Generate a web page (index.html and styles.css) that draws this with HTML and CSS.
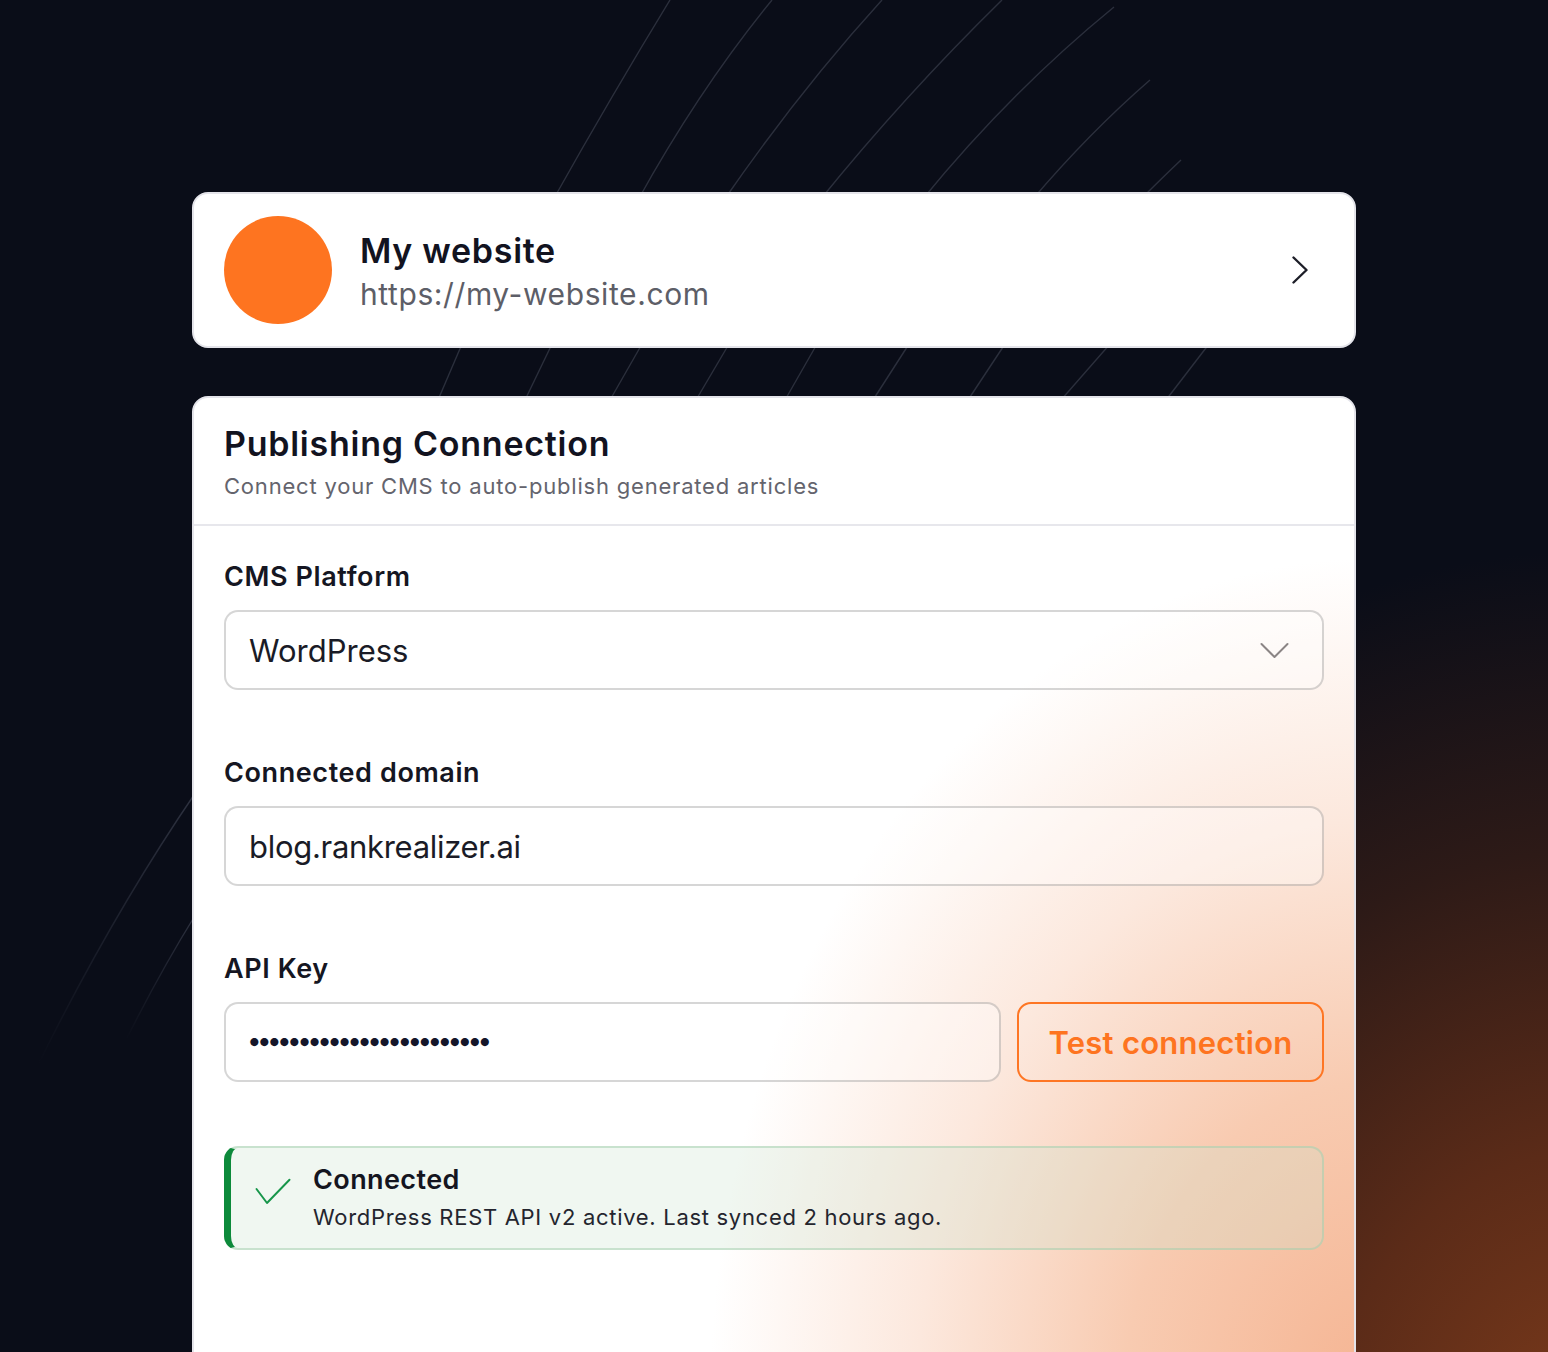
FILE: index.html
```html
<!DOCTYPE html>
<html lang="en">
<head>
<meta charset="utf-8">
<title>Publishing Connection</title>
<link rel="stylesheet" href="styles.css">
</head>
<body>
<svg class="bg-lines" width="1548" height="1352" viewBox="0 0 1548 1352" aria-hidden="true">
  <defs>
    <linearGradient id="fadeLeft" x1="0" y1="0" x2="0" y2="1">
      <stop offset="0" stop-color="#2e3240"/>
      <stop offset="1" stop-color="#2e3240" stop-opacity="0"/>
    </linearGradient>
  </defs>
  <g fill="none" stroke="#2b2f3c" stroke-width="1.4">
    <path d="M670,0 Q612,95 553,200"/>
    <path d="M772,0 Q700,88 638,200"/>
    <path d="M882,0 Q800,90 724,200"/>
    <path d="M1002,0 Q905,95 820,200"/>
    <path d="M1114,7 Q1010,92 922,200"/>
    <path d="M1150,80 Q1090,132 1032,200"/>
    <path d="M1181,160 Q1162,178 1140,200"/>
    <path d="M462,344 L438,400"/>
    <path d="M552,344 L525,400"/>
    <path d="M642,344 L610,400"/>
    <path d="M729,344 L696,400"/>
    <path d="M817,344 L785,400"/>
    <path d="M909,344 L873,400"/>
    <path d="M1005,344 L968,400"/>
    <path d="M1110,344 L1061,400"/>
    <path d="M1209,344 L1166,400"/>
  </g>
  <g fill="none" stroke="url(#fadeLeft)" stroke-width="1.4">
    <path d="M196,792 Q112,915 38,1065"/>
    <path d="M196,914 Q160,972 126,1040"/>
  </g>
</svg>

<main class="page">
  <section class="site-card">
    <div class="avatar"></div>
    <div class="site-info">
      <div class="site-name">My website</div>
      <div class="site-url">https://my-website.com</div>
    </div>
    <svg class="chevron-right" width="16" height="28" viewBox="0 0 16 28" aria-hidden="true">
      <path d="M1.5 1.5 L14.5 14 L1.5 26.5" fill="none" stroke="#1d1e28" stroke-width="2.4" stroke-linecap="round" stroke-linejoin="round"/>
    </svg>
  </section>

  <section class="panel">
    <header class="panel-head">
      <h1 class="panel-title">Publishing Connection</h1>
      <p class="panel-sub">Connect your CMS to auto-publish generated articles</p>
    </header>

    <div class="panel-body">
      <div class="field">
        <div class="label">CMS Platform</div>
        <div class="input select">
          <span class="value">WordPress</span>
          <svg class="chevron-down" width="30" height="17" viewBox="0 0 30 17" aria-hidden="true">
            <path d="M1.5 2 L14.5 15 L27.5 2" fill="none" stroke="#8b8585" stroke-width="2" stroke-linecap="round" stroke-linejoin="round"/>
          </svg>
        </div>
      </div>

      <div class="field">
        <div class="label">Connected domain</div>
        <div class="input">
          <span class="value domain">blog.rankrealizer.ai</span>
        </div>
      </div>

      <div class="field">
        <div class="label">API Key</div>
        <div class="key-row">
          <div class="input">
            <span class="dots">••••••••••••••••••••••••</span>
          </div>
          <button class="btn-outline">Test connection</button>
        </div>
      </div>

      <div class="status">
        <svg class="check" width="36" height="28" viewBox="0 0 36 28" aria-hidden="true">
          <path d="M1.5 11 L12 25 L34.5 1.8" fill="none" stroke="#17964a" stroke-width="2" stroke-linecap="round" stroke-linejoin="round"/>
        </svg>
        <div class="status-text">
          <div class="status-title">Connected</div>
          <div class="status-desc">WordPress REST API v2 active. Last synced 2 hours ago.</div>
        </div>
      </div>
    </div>
  </section>
</main>
</body>
</html>
```

FILE: styles.css
```css
* {
  box-sizing: border-box;
}

html, body {
  margin: 0;
  padding: 0;
}

body {
  width: 1548px;
  height: 1352px;
  overflow: hidden;
  position: relative;
  font-family: "Inter", "Noto Sans", "Liberation Sans", sans-serif;
  background:
    radial-gradient(ellipse 900px 1000px at 1600px 1450px, #7d3b1b 0%, #5b2b18 30%, #2d1a17 60%, rgba(10, 13, 24, 0) 90%),
    #0a0d18;
  color: #13141f;
}

.bg-lines {
  position: absolute;
  left: 0;
  top: 0;
  z-index: 0;
}

.page {
  position: relative;
  z-index: 1;
  padding: 192px 192px 0;
  display: flex;
  flex-direction: column;
  gap: 48px;
}

/* ---------- site card ---------- */
.site-card {
  height: 156px;
  background: #ffffff;
  border: 2px solid #e4e4ea;
  border-radius: 16px;
  display: flex;
  align-items: center;
  padding: 0 46px 0 30px;
  gap: 28px;
}

.avatar {
  width: 108px;
  height: 108px;
  border-radius: 50%;
  background: #fe7420;
  flex: none;
}

.site-info {
  flex: 1;
  display: flex;
  flex-direction: column;
}

.site-name {
  font-size: 34px;
  line-height: 48px;
  font-weight: 600;
  color: #12131f;
  letter-spacing: 0.7px;
}

.site-url {
  font-size: 30px;
  line-height: 39px;
  color: #5d5e67;
  letter-spacing: 0.6px;
}

.chevron-right {
  flex: none;
  display: block;
}

/* ---------- panel ---------- */
.panel {
  height: 1000px;
  border: 2px solid #e4e4ea;
  border-radius: 16px;
  background:
    radial-gradient(ellipse 830px 1050px at 1180px 1000px, #f5b492 0%, #f8cbb1 30%, #fce8dd 55%, rgba(255, 255, 255, 0) 80%),
    #ffffff;
  overflow: hidden;
}

.panel-head {
  padding: 25px 30px 23px;
  border-bottom: 2px solid #e7e7ec;
}

.panel-title {
  margin: 0;
  font-size: 34px;
  line-height: 41px;
  font-weight: 600;
  color: #12131f;
  letter-spacing: 0.75px;
}

.panel-sub {
  margin: 7px 0 0;
  font-size: 22px;
  line-height: 30px;
  color: #64646d;
  letter-spacing: 0.8px;
}

.panel-body {
  padding: 35px 30px 0;
  display: flex;
  flex-direction: column;
}

.field {
  display: flex;
  flex-direction: column;
  gap: 17px;
  margin-bottom: 67px;
}

.field:nth-child(3) {
  margin-bottom: 64px;
}

.label {
  font-size: 27px;
  line-height: 32px;
  font-weight: 600;
  color: #151622;
  letter-spacing: 0.6px;
}

.input {
  height: 80px;
  border: 2px solid rgba(0, 0, 0, 0.16);
  border-radius: 14px;
  background: rgba(255, 255, 255, 0.35);
  display: flex;
  align-items: center;
  padding: 0 32px 0 23px;
}

.value {
  font-size: 31px;
  color: #1a1b26;
}

.domain {
  letter-spacing: -0.3px;
}

.select {
  justify-content: space-between;
}

.chevron-down {
  display: block;
}

.key-row {
  display: grid;
  grid-template-columns: 1fr 307px;
  gap: 16px;
}

.dots {
  font-size: 26px;
  letter-spacing: -4.6px;
  color: #15162a;
  margin: -3px 0 0 -2px;
}

.btn-outline {
  height: 80px;
  border: 2px solid #fe7624;
  border-radius: 14px;
  background: transparent;
  color: #fe7420;
  font-family: inherit;
  font-size: 31px;
  font-weight: 600;
  letter-spacing: 0.25px;
  padding: 0;
}

/* ---------- status ---------- */
.status {
  height: 104px;
  border: 2px solid rgba(160, 205, 172, 0.5);
  border-left: 7px solid #0d8a3b;
  border-radius: 14px;
  background: rgba(205, 228, 210, 0.3);
  display: flex;
  align-items: center;
  padding: 0 24px 0 24px;
  gap: 22px;
}

.check {
  display: block;
  flex: none;
  margin-top: -12px;
}

.status-title {
  font-size: 27px;
  line-height: 34px;
  font-weight: 600;
  color: #14151f;
  letter-spacing: 0.4px;
}

.status-desc {
  margin-top: 4px;
  font-size: 22px;
  line-height: 32px;
  color: #24252e;
  letter-spacing: 0.7px;
}
```
